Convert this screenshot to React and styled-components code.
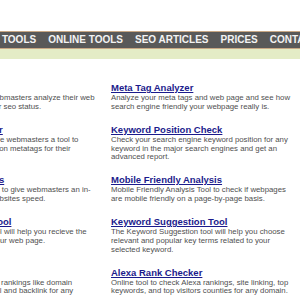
import React from "react";
import styled, { createGlobalStyle } from "styled-components";

const GlobalStyle = createGlobalStyle`
  html, body { margin: 0; padding: 0; background: #ffffff; overflow: hidden; }
  body { font-family: "Liberation Sans", Arial, sans-serif; }
`;

const Page = styled.div`
  margin-left: -100px;
  width: 520px;
`;

const Header = styled.header`
  height: 31px;
`;

const NavBar = styled.nav`
  display: flex;
  align-items: center;
  gap: 12px;
  height: 16px;
  padding-left: 78px;
  background: #595959;
  border-top: 1px solid #c8a784;
  border-bottom: 1px solid #c8a784;
  white-space: nowrap;
  overflow: hidden;
`;

const NavItem = styled.a`
  color: #f3f3f3;
  font-family: "Liberation Sans", Arial, sans-serif;
  font-weight: bold;
  font-size: 10px;
  line-height: 16px;
  text-decoration: none;
`;

const SubBar = styled.div`
  height: 10px;
  background: #e4ecc6;
`;

const Content = styled.main`
  display: grid;
  grid-template-columns: 184px 184px;
  column-gap: 18px;
  row-gap: 12.4px;
  padding: 23px 0 0 9px;
`;

const Tool = styled.div`
  display: flex;
  flex-direction: column;
`;

const Title = styled.a`
  display: block;
  font-family: "Liberation Sans", Arial, sans-serif;
  font-weight: bold;
  font-size: 9.5px;
  line-height: 12px;
  color: #1b1b8c;
  text-decoration: underline;
  white-space: nowrap;
`;

const Desc = styled.p`
  margin: 0;
  font-family: "Liberation Sans", Arial, sans-serif;
  font-size: 7.8px;
  line-height: 8.7px;
  color: #4f4f4f;
  white-space: nowrap;
`;

const nav = ["SEO TOOLS", "ONLINE TOOLS", "SEO ARTICLES", "PRICES", "CONTACT US"];

const tools = [
  {
    title: "SEO Analysis",
    lines: [
      "A useful tool that helps webmasters analyze their web",
      "pages and to improve their seo status.",
    ],
  },
  {
    title: "Meta Tag Analyzer",
    lines: [
      "Analyze your meta tags and web page and see how",
      "search engine friendly your webpage really is.",
    ],
  },
  {
    title: "Meta Tags Generator",
    lines: [
      "Meta tag generator will give webmasters a tool to",
      "help them to create common metatags for their",
      "websites.",
    ],
  },
  {
    title: "Keyword Position Check",
    lines: [
      "Check your search engine keyword position for any",
      "keyword in the major search engines and get an",
      "advanced report.",
    ],
  },
  {
    title: "Page Speed Analysis",
    lines: [
      "This analyzer was created to give webmasters an in-",
      "depth analysis for their websites speed.",
    ],
  },
  {
    title: "Mobile Friendly Analysis",
    lines: [
      "Mobile Friendly Analysis Tool to check if webpages",
      "are mobile friendly on a page-by-page basis.",
    ],
  },
  {
    title: "Backlink Analysis Tool",
    lines: [
      "The backlinks analysis tool will help you recieve the",
      "number of backlinks for your web page.",
    ],
  },
  {
    title: "Keyword Suggestion Tool",
    lines: [
      "The Keyword Suggestion tool will help you choose",
      "relevant and popular key terms related to your",
      "selected keyword.",
    ],
  },
  {
    title: "Website Rankings",
    lines: [
      "Check a website's various rankings like domain",
      "authority, page rank, social and backlink for any",
      "website.",
    ],
  },
  {
    title: "Alexa Rank Checker",
    lines: [
      "Online tool to check Alexa rankings, site linking, top",
      "keywords, and top visitors counties for any domain.",
    ],
  },
];

export default function App() {
  return (
    <>
      <GlobalStyle />
      <Page>
        <Header />
        <NavBar>
          {nav.map((n) => (
            <NavItem key={n} href="#">
              {n}
            </NavItem>
          ))}
        </NavBar>
        <SubBar />
        <Content>
          {tools.map((t) => (
            <Tool key={t.title}>
              <Title href="#">{t.title}</Title>
              <Desc>
                {t.lines.map((l, i) => (
                  <React.Fragment key={i}>
                    {l}
                    {i < t.lines.length - 1 && <br />}
                  </React.Fragment>
                ))}
              </Desc>
            </Tool>
          ))}
        </Content>
      </Page>
    </>
  );
}
